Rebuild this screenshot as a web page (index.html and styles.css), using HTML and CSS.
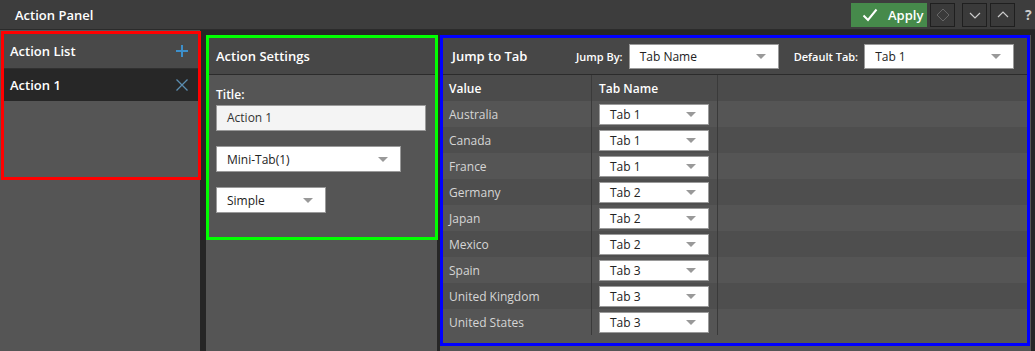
FILE: index.html
```html
<!DOCTYPE html>
<html>
<head>
  <meta charset="utf-8">
  <title>Action Panel</title>
  <link rel="stylesheet" href="styles.css">
</head>
<body>
  <div class="topbar">
    <div class="topbar-title">Action Panel</div>
    <div class="topbar-tools">
      <button class="btn-apply">
        <svg width="16" height="14" viewBox="0 0 16 14"><path d="M1.5 7.5 L6 12 L14.5 1.5" fill="none" stroke="#fff" stroke-width="2"/></svg>
        Apply
      </button>
      <button class="btn-tool">
        <svg width="14" height="14" viewBox="0 0 14 14"><path d="M7 1 L13 7 L7 13 L1 7 Z" fill="none" stroke="#666" stroke-width="1"/></svg>
      </button>
      <button class="btn-tool btn-gap">
        <svg width="14" height="10" viewBox="0 0 14 10"><path d="M2 3 L7 8 L12 3" fill="none" stroke="#ccc" stroke-width="1.2"/></svg>
      </button>
      <button class="btn-tool">
        <svg width="14" height="10" viewBox="0 0 14 10"><path d="M2 7 L7 2 L12 7" fill="none" stroke="#ccc" stroke-width="1.2"/></svg>
      </button>
      <span class="help">?</span>
    </div>
  </div>

  <div class="main">
    <!-- action list -->
    <div class="col col-list">
      <div class="box box-red">
        <div class="panel-head">
          <span>Action List</span>
          <svg width="12" height="12" viewBox="0 0 12 12"><path d="M6 0 V12 M0 6 H12" stroke="#3d8fca" stroke-width="2"/></svg>
        </div>
        <div class="list-item">
          <span>Action 1</span>
          <svg width="12" height="12" viewBox="0 0 12 12"><path d="M0.5 0.5 L11.5 11.5 M11.5 0.5 L0.5 11.5" stroke="#5b8db0" stroke-width="1.3"/></svg>
        </div>
      </div>
    </div>

    <!-- action settings -->
    <div class="col col-settings">
      <div class="box box-green">
        <div class="panel-head panel-head-tall">Action Settings</div>
        <div class="settings-body">
          <div class="field-label">Title:</div>
          <div class="text-input">Action 1</div>
          <div class="select select-mini"><span>Mini-Tab(1)</span><i class="caret"></i></div>
          <div class="select select-simple"><span>Simple</span><i class="caret"></i></div>
        </div>
      </div>
    </div>

    <!-- jump to tab -->
    <div class="col col-jump">
      <div class="box box-blue">
        <div class="panel-head panel-head-tall jump-head">
          <span class="jump-title">Jump to Tab</span>
          <span class="head-label">Jump By:</span>
          <div class="select select-head"><span>Tab Name</span><i class="caret"></i></div>
          <span class="head-label label-default">Default Tab:</span>
          <div class="select select-head"><span>Tab 1</span><i class="caret"></i></div>
        </div>
        <div class="grid">
          <div class="grid-row grid-header">
            <div class="cell cell-value">Value</div>
            <div class="cell cell-tab">Tab Name</div>
            <div class="cell cell-rest"></div>
          </div>
          <div class="grid-row odd"><div class="cell cell-value">Australia</div><div class="cell cell-tab"><div class="select select-cell"><span>Tab 1</span><i class="caret"></i></div></div><div class="cell cell-rest"></div></div>
          <div class="grid-row even"><div class="cell cell-value">Canada</div><div class="cell cell-tab"><div class="select select-cell"><span>Tab 1</span><i class="caret"></i></div></div><div class="cell cell-rest"></div></div>
          <div class="grid-row odd"><div class="cell cell-value">France</div><div class="cell cell-tab"><div class="select select-cell"><span>Tab 1</span><i class="caret"></i></div></div><div class="cell cell-rest"></div></div>
          <div class="grid-row even"><div class="cell cell-value">Germany</div><div class="cell cell-tab"><div class="select select-cell"><span>Tab 2</span><i class="caret"></i></div></div><div class="cell cell-rest"></div></div>
          <div class="grid-row odd"><div class="cell cell-value">Japan</div><div class="cell cell-tab"><div class="select select-cell"><span>Tab 2</span><i class="caret"></i></div></div><div class="cell cell-rest"></div></div>
          <div class="grid-row even"><div class="cell cell-value">Mexico</div><div class="cell cell-tab"><div class="select select-cell"><span>Tab 2</span><i class="caret"></i></div></div><div class="cell cell-rest"></div></div>
          <div class="grid-row odd"><div class="cell cell-value">Spain</div><div class="cell cell-tab"><div class="select select-cell"><span>Tab 3</span><i class="caret"></i></div></div><div class="cell cell-rest"></div></div>
          <div class="grid-row even"><div class="cell cell-value">United Kingdom</div><div class="cell cell-tab"><div class="select select-cell"><span>Tab 3</span><i class="caret"></i></div></div><div class="cell cell-rest"></div></div>
          <div class="grid-row odd"><div class="cell cell-value">United States</div><div class="cell cell-tab"><div class="select select-cell"><span>Tab 3</span><i class="caret"></i></div></div><div class="cell cell-rest"></div></div>
        </div>
      </div>
    </div>
  </div>
</body>
</html>
```

FILE: styles.css
```css
body {
  margin: 0;
  background: #262626;
  font-family: "Open Sans", "Liberation Sans", sans-serif;
  font-size: 12px;
  color: #fff;
  width: 1035px;
  height: 351px;
  overflow: hidden;
}

/* top bar */
.topbar {
  display: flex;
  align-items: center;
  justify-content: space-between;
  height: 29px;
  border-bottom: 1px solid #2b2b2b;
  background: #3d3d3d;
}
.topbar-title {
  padding-left: 15px;
  font-size: 13px;
  font-weight: 600;
}
.topbar-tools {
  display: flex;
  align-items: center;
  padding-right: 3px;
}
.topbar-tools button {
  font-family: inherit;
  cursor: pointer;
}
.btn-apply {
  display: flex;
  align-items: center;
  gap: 10px;
  height: 24px;
  width: 76px;
  padding: 0 0 0 11px;
  border: none;
  background: #468a4b;
  color: #fff;
  font-size: 13px;
  font-weight: 600;
}
.btn-tool {
  display: flex;
  align-items: center;
  justify-content: center;
  width: 25px;
  height: 24px;
  margin-left: 3px;
  padding: 0;
  border: 1px solid #1f1f1f;
  background: #3a3a3a;
}
.btn-gap {
  margin-left: 7px;
}
.help {
  width: 7px;
  margin-left: 10px;
  color: #ccc;
  font-size: 14px;
  font-weight: 700;
}

/* columns */
.main {
  display: flex;
  height: 321px;
}
.col {
  background: #555;
}
.col-list {
  width: 200px;
}
.col-settings {
  width: 231px;
  margin: 5px 0 0 6px;
}
.col-jump {
  width: 591px;
  margin: 5px 0 0 3px;
}

/* marker boxes */
.box {
  border: 3px solid;
}
.box-red {
  border-color: #ff0000;
  width: 194px;
  height: 143px;
  margin: 1px 0 0 1px;
}
.box-green {
  border-color: #00ff00;
  width: 226px;
  height: 199px;
}
.box-blue {
  border-color: #0000ff;
  width: 584px;
  height: 305px;
}

/* panel headers */
.panel-head {
  display: flex;
  align-items: center;
  justify-content: space-between;
  height: 34px;
  padding: 0 10px 0 6px;
  background: #494949;
  font-size: 13px;
  font-weight: 600;
}
.panel-head-tall {
  height: 36px;
  padding: 0 7px;
  background: #474747;
  border-bottom: 1px solid #2b2b2b;
}
.list-item {
  display: flex;
  align-items: center;
  justify-content: space-between;
  height: 32px;
  padding: 0 10px 0 6px;
  border-top: 1px solid #303030;
  background: #272727;
  font-size: 13px;
  font-weight: 600;
}

/* settings form */
.settings-body {
  padding: 13px 7px 0 7px;
}
.field-label {
  font-weight: 600;
  line-height: 14px;
  margin-bottom: 3px;
}
.text-input {
  width: 198px;
  height: 24px;
  line-height: 24px;
  padding-left: 10px;
  border: 1px solid #9a9a9a;
  background: #f4f4f4;
  color: #333;
}

/* selects */
.select {
  display: flex;
  align-items: center;
  justify-content: space-between;
  flex-shrink: 0;
  box-sizing: border-box;
  border: 1px solid #9a9a9a;
  background: #fff;
  color: #222;
  padding: 0 12px 0 10px;
  font-size: 12px;
  font-weight: 400;
}
.caret {
  width: 0;
  height: 0;
  border-left: 5px solid transparent;
  border-right: 5px solid transparent;
  border-top: 5px solid #999;
}
.select-mini {
  width: 185px;
  height: 26px;
  margin-top: 15px;
}
.select-simple {
  width: 110px;
  height: 26px;
  margin-top: 15px;
}
.select-head {
  width: 150px;
  height: 25px;
}
.select-cell {
  width: 110px;
  height: 21px;
  padding-left: 10px;
}

/* jump to tab header */
.jump-head {
  justify-content: flex-start;
  padding-left: 9px;
}
.jump-title {
  width: 124px;
  flex-shrink: 0;
}
.head-label {
  flex-shrink: 0;
  white-space: nowrap;
  font-size: 11px;
  margin-right: 6px;
}
.label-default {
  margin-left: 15px;
}

/* grid */
.grid-row {
  display: flex;
  height: 26px;
}
.grid-header {
  background: #4b4b4b;
  font-weight: 600;
}
.odd {
  background: #555;
}
.even {
  background: #4e4e4e;
}
.cell {
  display: flex;
  align-items: center;
  box-sizing: border-box;
}
.cell-value {
  width: 149px;
  padding-left: 6px;
  border-right: 1px solid #3a3a3a;
  color: #d6d6d6;
}
.grid-header .cell-value {
  color: #fff;
}
.cell-tab {
  width: 126px;
  padding-left: 7px;
  border-right: 1px solid #3a3a3a;
}
.cell-rest {
  flex: 1;
}
```
